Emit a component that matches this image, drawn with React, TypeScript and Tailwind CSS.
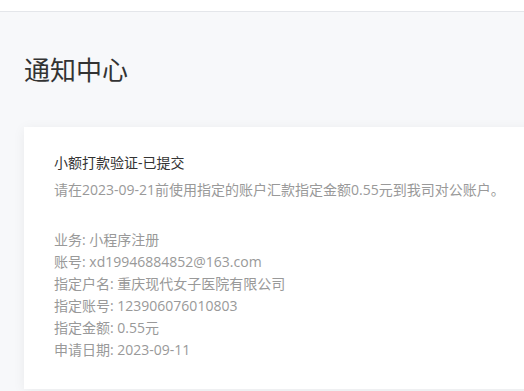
import React from "react";

const details = [
  { label: "业务", value: "小程序注册" },
  { label: "账号", value: "xd19946884852@163.com" },
  { label: "指定户名", value: "重庆现代女子医院有限公司" },
  { label: "指定账号", value: "123906076010803" },
  { label: "指定金额", value: "0.55元" },
  { label: "申请日期", value: "2023-09-11" },
];

export default function App() {
  return (
    <div
      className="min-h-screen w-[524px] h-[391px] overflow-hidden bg-[#f7f8fa]"
      style={{ fontFamily: '"Open Sans", "Noto Sans CJK SC", sans-serif' }}
    >
      {/* Top bar */}
      <div className="h-[12px] bg-white border-b border-[#e4e6ea]" />

      {/* Page title */}
      <h1 className="mt-[40px] ml-[24px] text-[26px] leading-[36px] font-normal text-[#333333]">
        通知中心
      </h1>

      {/* Notification card */}
      <div className="mt-[39px] ml-[24px] w-[540px] bg-white shadow-[0_2px_12px_rgba(0,0,0,0.06)] pt-[25px] pb-[28px] px-[30px]">
        <div className="text-[14px] leading-[22px] text-[#333333]">小额打款验证-已提交</div>
        <div className="mt-[5px] text-[14px] leading-[22px] text-[#999999]">
          请在2023-09-21前使用指定的账户汇款指定金额0.55元到我司对公账户。
        </div>
        <div className="mt-[28px] flex flex-col text-[14px] leading-[22px] text-[#999999]">
          {details.map((d) => (
            <div key={d.label}>
              {d.label}: {d.value}
            </div>
          ))}
        </div>
      </div>
    </div>
  );
}
